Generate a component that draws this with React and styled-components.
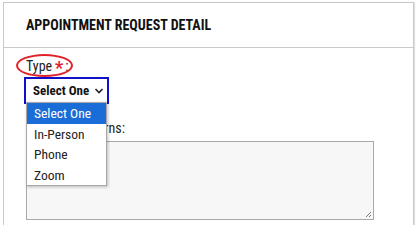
import React from 'react';
import styled, { createGlobalStyle } from 'styled-components';

const GlobalStyle = createGlobalStyle`
  body {
    margin: 0;
    background: #fff;
    font-family: "Roboto Condensed", Roboto, "Liberation Sans", Arial, sans-serif;
    color: #222;
  }
`;

const Page = styled.div`
  padding: 2px 6px 0 3px;
  height: 225px;
  box-sizing: border-box;
  overflow: hidden;
`;

const Card = styled.section`
  border: 1px solid #c9c9c9;
  border-bottom: none;
  box-shadow: 1px 0 1px rgba(0, 0, 0, 0.12);
  height: 240px;
`;

const CardHeader = styled.div`
  height: 44px;
  display: flex;
  align-items: center;
  padding-left: 22px;
  border-bottom: 1px solid #c9c9c9;
  font-weight: 700;
  font-size: 14px;
  color: #111;
  text-transform: uppercase;
`;

const CardBody = styled.div`
  padding: 10px 22px 0;
  display: flex;
  flex-direction: column;
  gap: ${p => p.gap}px;
`;

const Field = styled.div`
  position: relative;
  display: flex;
  flex-direction: column;
  align-items: flex-start;
  gap: ${p => p.gap}px;
`;

const Label = styled.label`
  position: relative;
  display: inline-block;
  font-size: 14px;
  line-height: 17px;
  color: #222;
`;

const Required = styled.span`
  color: #e0232b;
  font-weight: 700;
  font-size: 18px;
  line-height: 0;
  margin: 0 2px 0 3px;
  vertical-align: -3px;
`;

const Ring = styled.span`
  position: absolute;
  left: -10px;
  top: -4px;
  width: 53px;
  height: 19px;
  border: 2px solid #e0232b;
  border-radius: 50%;
`;

const SelectBox = styled.div`
  margin-left: -2px;
  width: 72px;
  height: 23px;
  box-sizing: content-box;
  border: 2px solid #1010c8;
  display: flex;
  align-items: center;
  justify-content: space-between;
  padding-left: 7px;
  padding-right: 2px;
  font-size: 13px;
  font-weight: 700;
  white-space: nowrap;
  color: #111;
  background: #fff;
`;

const OptionList = styled.ul`
  position: absolute;
  left: 0;
  top: 44px;
  width: 79px;
  margin: 0;
  padding: 0;
  list-style: none;
  background: #fff;
  border: 1px solid #a8a8a8;
  box-shadow: 1px 1px 3px rgba(0, 0, 0, 0.25);
  z-index: 2;
`;

const Option = styled.li`
  height: 20.5px;
  line-height: 20px;
  padding-left: 7px;
  font-size: 13.5px;
  color: ${p => (p.active ? '#fff' : '#222')};
  background: ${p => (p.active ? '#1a6dd6' : 'transparent')};
`;

const TextArea = styled.div`
  width: 346px;
  height: 77px;
  border: 1px solid #a9a9a9;
  background: #f7f7f7;
  position: relative;
`;

const Grip = styled.svg`
  position: absolute;
  right: 1px;
  bottom: 1px;
`;

const options = ['Select One', 'In-Person', 'Phone', 'Zoom'];

const App = () => (
  <Page>
    <GlobalStyle />
    <Card>
      <CardHeader>Appointment Request Detail</CardHeader>
      <CardBody gap={16}>
        <Field gap={2}>
          <Label>
            <Ring />
            Type<Required>*</Required>:
          </Label>
          <SelectBox>
            <span>Select One</span>
            <svg width="12" height="6" viewBox="0 0 12 6">
              <path d="M2.5 1l3.5 3.5L9.5 1" fill="none" stroke="#222" strokeWidth="1.6" />
            </svg>
          </SelectBox>
          <OptionList>
            {options.map((o, i) => (
              <Option key={o} active={i === 0}>{o}</Option>
            ))}
          </OptionList>
        </Field>
        <Field gap={4}>
          <Label>Special Concerns:</Label>
          <TextArea>
            <Grip width="8" height="8" viewBox="0 0 8 8">
              <path d="M7 2L2 7M7 5L5 7" stroke="#777" strokeWidth="1" />
            </Grip>
          </TextArea>
        </Field>
      </CardBody>
    </Card>
  </Page>
);

export default App;
